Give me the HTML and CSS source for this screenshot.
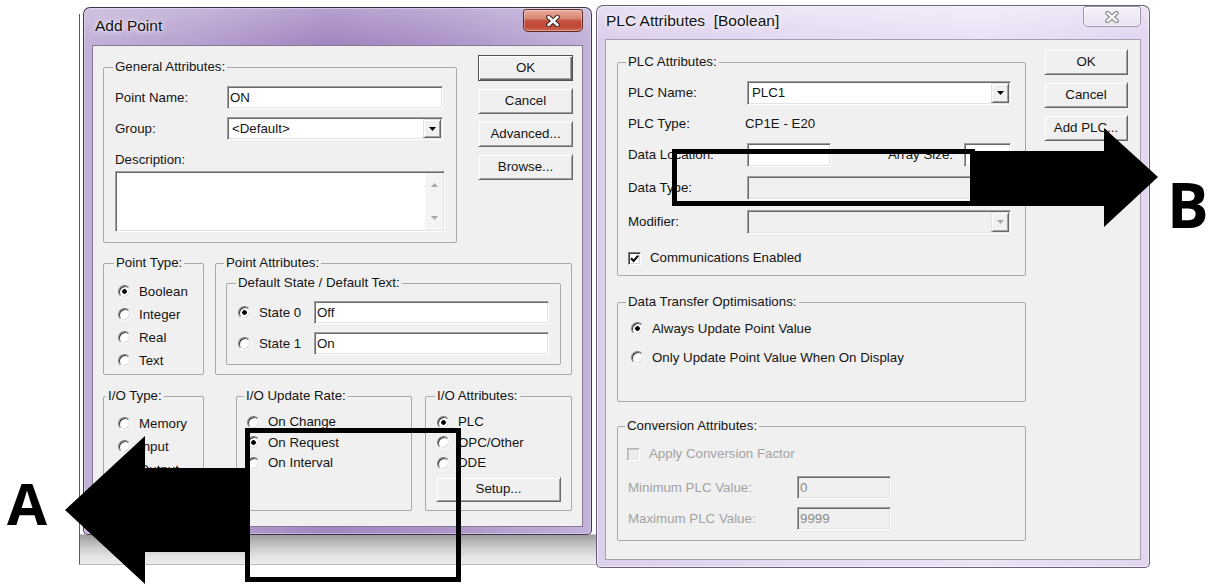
FILE: index.html
```html
<!DOCTYPE html>
<html lang="en">
<head>
<meta charset="utf-8">
<title>Add Point / PLC Attributes</title>
<link rel="stylesheet" href="styles.css">
</head>
<body>
<div class="desk">
  <div class="backdrop"></div>

  <!-- Add Point dialog -->
  <section class="win win-add">
    <header class="titlebar">
      <span class="title">Add Point</span>
      <button class="close close-active" aria-label="Close">
        <svg width="16" height="12" viewBox="0 0 16 12"><path d="M3.5 2 12.5 10M12.5 2 3.5 10" stroke="#3a2222" stroke-width="4.6" stroke-linecap="round"/><path d="M3.5 2 12.5 10M12.5 2 3.5 10" stroke="#fff" stroke-width="2.6" stroke-linecap="round"/></svg>
      </button>
    </header>
    <div class="client client-add">
      <div class="row-top">
        <fieldset class="grp grp-general">
          <legend>General Attributes:</legend>
          <div class="field"><span class="lbl-add">Point Name:</span><div class="edit ctl-add">ON</div></div>
          <div class="field mt8"><span class="lbl-add">Group:</span>
            <div class="combo ctl-add"><span class="combo-val">&lt;Default&gt;</span><span class="drop"><svg width="7" height="4" viewBox="0 0 7 4"><path d="M0 0h7L3.5 4z" fill="#000"/></svg></span></div>
          </div>
          <div class="desc-lbl">Description:</div>
          <div class="memo">
            <div class="vscroll">
              <svg width="7" height="4" viewBox="0 0 7 4"><path d="M0 4h7L3.5 0z" fill="#a8a8a8"/></svg>
              <svg width="7" height="4" viewBox="0 0 7 4"><path d="M0 0h7L3.5 4z" fill="#a8a8a8"/></svg>
            </div>
          </div>
        </fieldset>
        <div class="btn-col btn-col-add">
          <button class="btn btn-default">OK</button>
          <button class="btn">Cancel</button>
          <button class="btn">Advanced...</button>
          <button class="btn">Browse...</button>
        </div>
      </div>

      <div class="row-mid">
        <fieldset class="grp grp-ptype">
          <legend>Point Type:</legend>
          <div class="opt h23"><span class="radio on"></span>Boolean</div>
          <div class="opt h23"><span class="radio"></span>Integer</div>
          <div class="opt h23"><span class="radio"></span>Real</div>
          <div class="opt h23"><span class="radio"></span>Text</div>
        </fieldset>
        <fieldset class="grp grp-pattr">
          <legend>Point Attributes:</legend>
          <fieldset class="grp grp-defstate">
            <legend>Default State / Default Text:</legend>
            <div class="state-row"><span class="radio on"></span><span>State 0</span><div class="edit state-edit">Off</div></div>
            <div class="state-row"><span class="radio"></span><span>State 1</span><div class="edit state-edit">On</div></div>
          </fieldset>
        </fieldset>
      </div>

      <div class="row-io">
        <fieldset class="grp grp-iotype">
          <legend>I/O Type:</legend>
          <div class="opt h23"><span class="radio"></span>Memory</div>
          <div class="opt h23"><span class="radio"></span>Input</div>
          <div class="opt h23"><span class="radio"></span>Output</div>
        </fieldset>
        <fieldset class="grp grp-iorate">
          <legend>I/O Update Rate:</legend>
          <div class="opt h20"><span class="radio"></span>On Change</div>
          <div class="opt h20"><span class="radio on"></span>On Request</div>
          <div class="opt h20"><span class="radio"></span>On Interval</div>
        </fieldset>
        <fieldset class="grp grp-ioattr">
          <legend>I/O Attributes:</legend>
          <div class="opt h20"><span class="radio on"></span>PLC</div>
          <div class="opt h20"><span class="radio"></span>OPC/Other</div>
          <div class="opt h20"><span class="radio"></span>DDE</div>
          <button class="btn setup">Setup...</button>
        </fieldset>
      </div>
    </div>
  </section>

  <!-- PLC Attributes dialog -->
  <section class="win win-plc">
    <header class="titlebar">
      <span class="title">PLC Attributes  [Boolean]</span>
      <button class="close close-idle" aria-label="Close">
        <svg width="16" height="12" viewBox="0 0 16 12"><path d="M3.5 2 12.5 10M12.5 2 3.5 10" stroke="#7d7d7d" stroke-width="4.4" stroke-linecap="round"/><path d="M3.5 2 12.5 10M12.5 2 3.5 10" stroke="#f7f5fa" stroke-width="2.4" stroke-linecap="round"/></svg>
      </button>
    </header>
    <div class="client client-plc">
      <div class="plc-col">
        <fieldset class="grp grp-plc">
          <legend>PLC Attributes:</legend>
          <div class="prow"><span class="plbl">PLC Name:</span>
            <div class="combo w264"><span class="combo-val">PLC1</span><span class="drop"><svg width="7" height="4" viewBox="0 0 7 4"><path d="M0 0h7L3.5 4z" fill="#000"/></svg></span></div>
          </div>
          <div class="prow mt7"><span class="plbl">PLC Type:</span><span class="ptype-val">CP1E - E20</span></div>
          <div class="prow mt7"><span class="plbl">Data Location:</span><div class="edit loc-edit"></div><span class="arr-lbl">Array Size:</span><div class="edit arr-edit"></div></div>
          <div class="prow mt9"><span class="plbl">Data Type:</span><div class="edit off w264"></div></div>
          <div class="prow mt10"><span class="plbl">Modifier:</span>
            <div class="combo off w264"><span class="combo-val"></span><span class="drop"><svg width="7" height="4" viewBox="0 0 7 4"><path d="M0 0h7L3.5 4z" fill="#a6a6a6"/></svg></span></div>
          </div>
          <div class="prow check-row mt13"><span class="check"><svg width="11" height="11" viewBox="0 0 11 11"><path d="M2 5.2l2.6 2.7L9.2 2.6" stroke="#000" stroke-width="2" fill="none"/></svg></span>Communications Enabled</div>
        </fieldset>

        <fieldset class="grp grp-dto">
          <legend>Data Transfer Optimisations:</legend>
          <div class="opt h29"><span class="radio on"></span>Always Update Point Value</div>
          <div class="opt h29"><span class="radio"></span>Only Update Point Value When On Display</div>
        </fieldset>

        <fieldset class="grp grp-conv">
          <legend>Conversion Attributes:</legend>
          <div class="prow check-row dis"><span class="check check-off"></span>Apply Conversion Factor</div>
          <div class="prow conv-row mt11 dis"><span class="clbl">Minimum PLC Value:</span><div class="edit off cedit">0</div></div>
          <div class="prow conv-row mt8 dis"><span class="clbl">Maximum PLC Value:</span><div class="edit off cedit">9999</div></div>
        </fieldset>
      </div>
      <div class="btn-col btn-col-plc">
        <button class="btn">OK</button>
        <button class="btn">Cancel</button>
        <button class="btn">Add PLC...</button>
      </div>
    </div>
  </section>

  <!-- callout marks drawn over both dialogs -->
  <svg class="marks" width="1221" height="585" viewBox="0 0 1221 585">
    <polygon points="65,510 145,436 145,468 248,468 248,552 145,552 145,584" fill="#000"/>
    <rect x="247.5" y="430.5" width="211" height="149" fill="none" stroke="#000" stroke-width="5"/>
    <rect x="674.5" y="151.5" width="298" height="52" fill="none" stroke="#000" stroke-width="5"/>
    <polygon points="972,151 1104,151 1104,128 1158,177 1104,227 1104,206 972,206" fill="#000"/>
  </svg>
  <div class="tag tag-a">A</div>
  <div class="tag tag-b">B</div>
</div>
</body>
</html>
```

FILE: styles.css
```css
* { box-sizing: border-box; }

body { margin: 0; background: #fff; }

.desk {
  position: relative;
  width: 1221px;
  height: 585px;
  overflow: hidden;
  background: #fff;
  font: 13.3px/16px "Liberation Sans", Arial, sans-serif;
  color: #141414;
}

/* parent application window peeking out behind the dialogs */
.backdrop {
  position: absolute;
  left: 79px;
  top: 14px;
  width: 518px;
  height: 551px;
  border-left: 1px solid #5e5e5e;
  border-bottom: 1px solid #bcbcbc;
  background: linear-gradient(180deg, rgba(255,255,255,0) 520px, #9c9c9c 521px, #cdcdcd 534px, #e4e4e4 543px, #eeeeee 550px);
}

/* ---------- window chrome ---------- */
.win {
  position: absolute;
  display: flex;
  flex-direction: column;
  border: 1px solid rgba(30, 20, 45, .8);
  border-radius: 7px 7px 5px 5px;
  padding: 0 8px 7px;
}

.win-add {
  left: 83px;
  top: 7px;
  width: 509px;
  height: 528px;
  background:
    linear-gradient(180deg, rgba(255,255,255,.22) 0, rgba(255,255,255,0) 34px),
    linear-gradient(90deg, #c3b2d8 0%, #b7a1d0 22%, #a286c1 48%, #ab92c8 68%, #c3b2d9 100%);
  box-shadow: inset 0 0 0 1px rgba(255,255,255,.35);
}

.win-plc {
  left: 596px;
  top: 5px;
  width: 554px;
  height: 563px;
  border-color: rgba(60, 55, 70, .75);
  background:
    linear-gradient(180deg, rgba(255,255,255,.35), rgba(255,255,255,0) 30px),
    linear-gradient(90deg, #dccfeb 0%, #e6dcf3 40%, #ebe3f6 70%, #e2d6f0 100%);
  box-shadow: inset 0 0 0 1px rgba(255,255,255,.5);
}

.titlebar { display: flex; align-items: flex-start; flex: none; }
.win-add .titlebar { height: 37px; }
.win-plc .titlebar { height: 33px; }

.title {
  font-size: 15.5px;
  line-height: 18px;
  color: #111;
  white-space: pre;
  text-shadow: 0 0 7px #fff, 0 0 3px rgba(255,255,255,.8);
}
.win-add .title { margin: 9px 0 0 3px; }
.win-plc .title { margin: 6px 0 0 1px; }

.close {
  margin-left: auto;
  padding: 0;
  display: flex;
  align-items: center;
  justify-content: center;
  border-radius: 3px 3px 5px 5px;
}
.close-active {
  width: 60px;
  height: 23px;
  margin-top: 1px;
  border: 1px solid #5e2a25;
  background: linear-gradient(180deg, #e9a99b 0%, #d98573 40%, #c5503c 52%, #c0483a 80%, #d06a50 100%);
  box-shadow: inset 0 0 0 1px rgba(255,255,255,.35);
}
.close-idle {
  width: 58px;
  height: 21px;
  border: 1px solid #9e94aa;
  background: linear-gradient(180deg, #f6f2fa, #e9e1f2);
  box-shadow: inset 0 0 0 1px rgba(255,255,255,.6);
}

.client {
  flex: 1;
  background: #f0f0f0;
  border: 1px solid rgba(60, 40, 85, .6);
}
.client-add { padding: 9px 0 0 10px; display: flex; flex-direction: column; }
.client-plc {
  padding: 9px 0 0 11px;
  display: flex;
  gap: 18px;
  align-items: flex-start;
  border-color: rgba(90, 80, 110, .5);
}

/* ---------- group boxes ---------- */
.grp {
  margin: 0;
  min-width: 0;
  border: 1px solid #a9a9a9;
  border-radius: 2px;
}
.grp > legend { padding: 0 2px; margin-left: -2px; line-height: 16px; }

/* ---------- controls ---------- */
.edit, .combo, .memo {
  background: #fff;
  border: 1px solid;
  border-color: #a0a0a0 #fff #fff #a0a0a0;
  box-shadow: inset 1px 1px 0 #696969, inset -1px -1px 0 #e3e3e3;
}
.edit { padding: 0 2px; display: flex; align-items: center; white-space: nowrap; overflow: hidden; }
.edit.off, .combo.off { background: #f0f0f0; }

.combo { padding: 1px; display: flex; }
.combo-val { flex: 1; padding-left: 3px; display: flex; align-items: center; }
.drop {
  width: 18px;
  flex: none;
  display: flex;
  align-items: center;
  justify-content: center;
  background: #f0f0f0;
  border: 1px solid;
  border-color: #e3e3e3 #696969 #696969 #e3e3e3;
  box-shadow: inset 1px 1px 0 #fff, inset -1px -1px 0 #a0a0a0;
}

.btn {
  height: 26px;
  padding: 0;
  font: inherit;
  color: inherit;
  background: #f0f0f0;
  border: 1px solid;
  border-color: #f0f0f0 #696969 #696969 #f0f0f0;
  box-shadow: inset 1px 1px 0 #fff, inset -1px -1px 0 #a0a0a0;
}
.btn-default {
  border-color: #505050;
  box-shadow: inset 1px 1px 0 #fff, inset -1px -1px 0 #696969, inset -2px -2px 0 #a0a0a0;
}
.btn-col { display: flex; flex-direction: column; gap: 7px; flex: none; }
.btn-col-add { width: 95px; }
.btn-col-plc { width: 84px; }

.radio {
  width: 13px;
  height: 13px;
  flex: none;
  border-radius: 50%;
  background: #fff;
  border: 1px solid;
  border-color: #7c7c7c #fdfdfd #fdfdfd #7c7c7c;
  box-shadow: inset 1px 1px 0 #3e3e3e, inset -1px -1px 0 #d8d8d8;
}
.radio.on { background: radial-gradient(circle at 50% 50%, #000 0 2px, #fff 2.6px); }

.check {
  width: 13px;
  height: 13px;
  flex: none;
  display: flex;
  align-items: center;
  justify-content: center;
  background: #fff;
  border: 1px solid;
  border-color: #7c7c7c #fff #fff #7c7c7c;
  box-shadow: inset 1px 1px 0 #3e3e3e, inset -1px -1px 0 #d8d8d8;
}
.check-off {
  background: #ececec;
  border-color: #b4b4b4 #fff #fff #b4b4b4;
  box-shadow: inset 1px 1px 0 #cacaca;
}

.opt { display: flex; align-items: center; gap: 8px; white-space: nowrap; }
.h23 { height: 23px; }
.h20 { height: 20.5px; }
.h29 { height: 29px; }

.mt7 { margin-top: 7px; }
.mt8 { margin-top: 8px; }
.mt9 { margin-top: 9px; }
.mt10 { margin-top: 10px; }
.mt11 { margin-top: 11px; }
.mt13 { margin-top: 13px; }

/* ---------- Add Point layout ---------- */
.row-top { display: flex; gap: 21px; align-items: flex-start; }

.grp-general { width: 354px; height: 184px; margin-top: 4px; padding: 11px 0 0 11px; }
.field { display: flex; align-items: center; }
.lbl-add { width: 112px; flex: none; }
.ctl-add { width: 216px; height: 23px; }
.desc-lbl { margin-top: 12px; }
.memo {
  width: 330px;
  height: 61px;
  margin-top: 3px;
  padding: 1px;
  display: flex;
  justify-content: flex-end;
}
.vscroll {
  width: 18px;
  background: #f4f4f4;
  display: flex;
  flex-direction: column;
  justify-content: space-between;
  align-items: center;
  padding: 10px 0;
}

.row-mid { display: flex; gap: 11px; margin-top: 12px; }
.grp-ptype { width: 101px; height: 120px; padding: 9px 0 0 14px; }
.grp-ptype > legend { margin-left: -4px; }
.grp-pattr { width: 357px; height: 120px; padding: 4px 0 0 10px; }
.grp-defstate { width: 335px; height: 90px; padding: 10px 11px 0 11px; }
.state-row { display: flex; align-items: center; gap: 8px; height: 23px; }
.state-row + .state-row { margin-top: 8px; }
.state-edit { margin-left: auto; width: 235px; height: 23px; }

.row-io { display: flex; margin-top: 13px; }
.grp-iotype { width: 101px; height: 123px; padding: 8px 0 0 14px; margin-right: 32px; }
.grp-iotype > legend { margin-left: -12px; }
.grp-iorate { width: 176px; height: 123px; padding: 8px 0 0 10px; margin-right: 13px; }
.grp-iorate > legend { margin-left: -3px; }
.grp-ioattr { width: 147px; height: 123px; padding: 8px 0 0 11px; }
.setup { width: 125px; height: 25px; margin: 3px 0 0 -1px; }

/* ---------- PLC Attributes layout ---------- */
.plc-col { display: flex; flex-direction: column; width: 409px; flex: none; }

.grp-plc { height: 222px; margin-top: 5px; padding: 11px 14px 0 10px; }
.prow { display: flex; align-items: center; height: 24px; white-space: nowrap; }
.plbl { width: 119px; flex: none; }
.w264 { width: 264px; height: 24px; }
.ptype-val { margin-left: -2px; }
.loc-edit { width: 84px; height: 24px; }
.arr-lbl { margin-left: auto; }
.arr-edit { width: 47px; height: 24px; margin-left: 11px; }
.check-row { height: 22px; gap: 9px; }

.grp-dto { height: 108px; margin-top: 18px; padding: 4px 0 0 13px; }
.grp-dto > legend { margin-left: -5px; }

.grp-conv { height: 123px; margin-top: 16px; padding: 9px 0 0 9px; }
.dis { color: #a3a3a3; }
.conv-row { height: 23px; }
.clbl { width: 170px; flex: none; padding-left: 1px; }
.cedit { width: 94px; height: 23px; color: #8a8a8a; }

/* ---------- callouts ---------- */
.marks { position: absolute; left: 0; top: 0; pointer-events: none; }
.tag {
  position: absolute;
  font-family: "Open Sans", "Liberation Sans", sans-serif;
  font-weight: 700;
  color: #000;
}
.tag-a { left: 7px; top: 474px; font-size: 58px; line-height: 58px; }
.tag-b { left: 1167px; top: 173px; font-size: 62px; line-height: 62px; }
```
